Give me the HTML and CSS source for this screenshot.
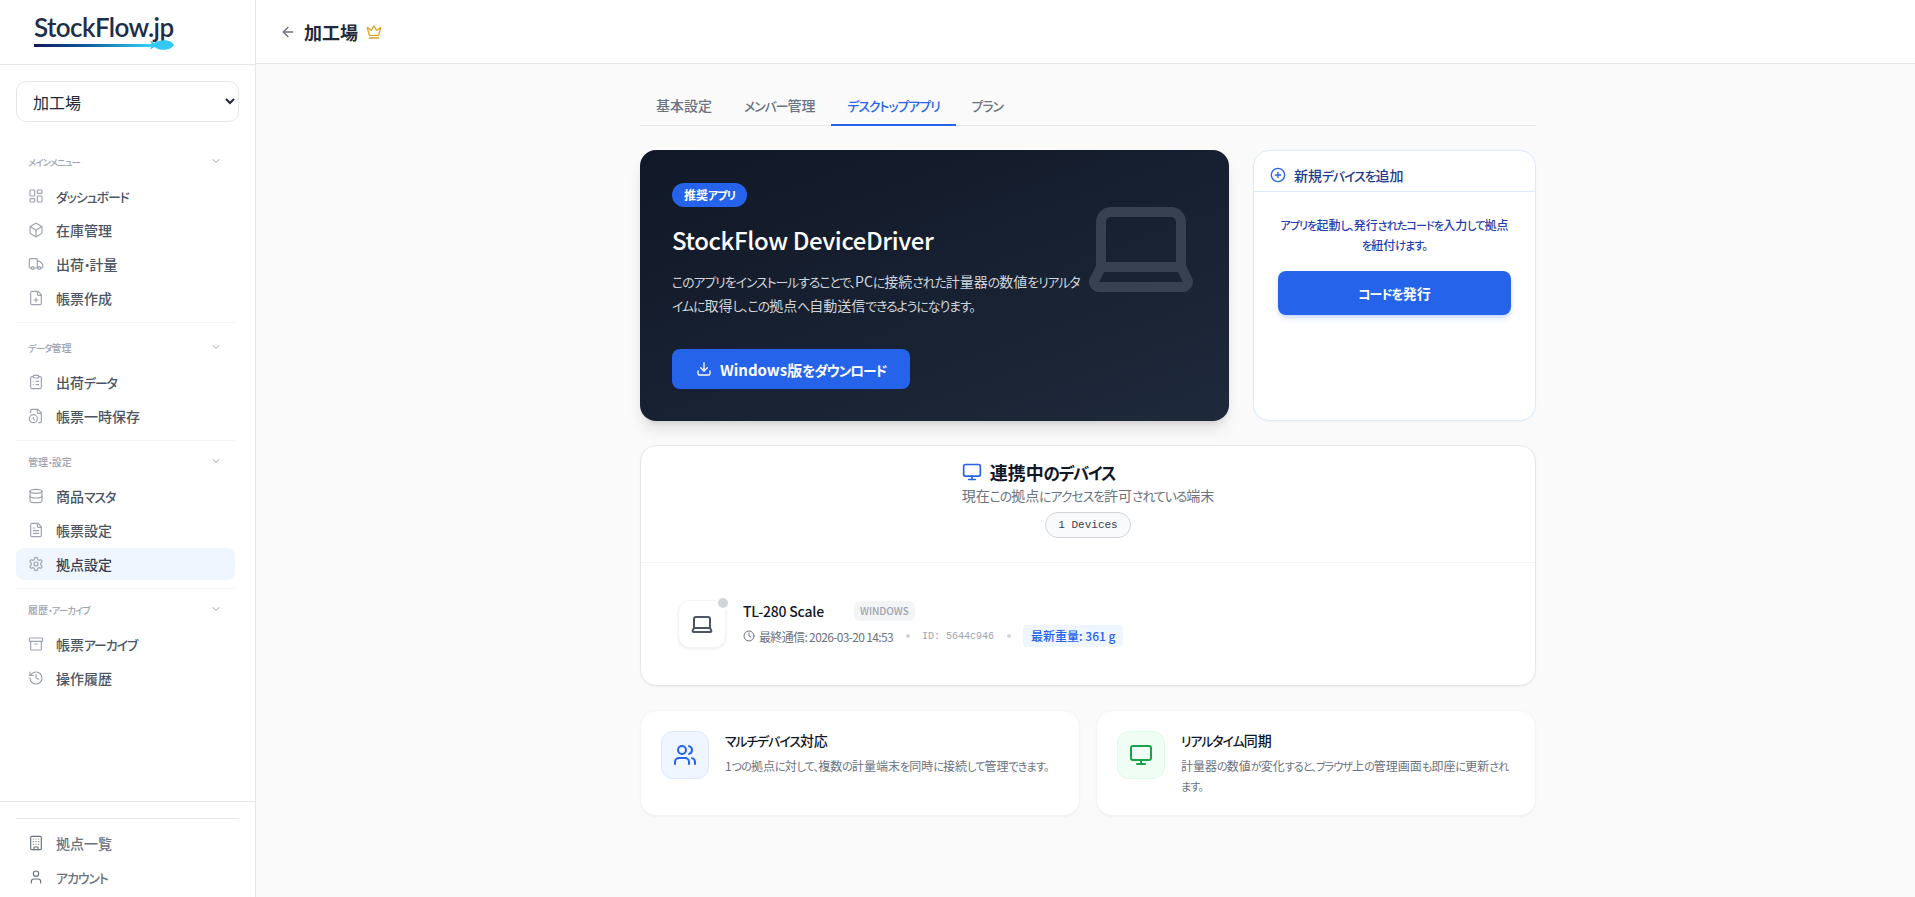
FILE: index.html
```html
<!DOCTYPE html>
<html lang="ja">
<head>
<meta charset="utf-8">
<title>StockFlow.jp</title>
<link rel="stylesheet" href="styles.css">
<script src="script.js" defer></script>
</head>
<body>
<svg class="sprite" aria-hidden="true">
  <symbol id="i-dash" viewBox="0 0 24 24"><rect x="3" y="3" width="7" height="9" rx="1"/><rect x="14" y="3" width="7" height="5" rx="1"/><rect x="14" y="12" width="7" height="9" rx="1"/><rect x="3" y="16" width="7" height="5" rx="1"/></symbol>
  <symbol id="i-box" viewBox="0 0 24 24"><path d="M21 8a2 2 0 0 0-1-1.73l-7-4a2 2 0 0 0-2 0l-7 4A2 2 0 0 0 3 8v8a2 2 0 0 0 1 1.73l7 4a2 2 0 0 0 2 0l7-4A2 2 0 0 0 21 16Z"/><path d="m3.3 7 8.7 5 8.7-5"/><path d="M12 22V12"/></symbol>
  <symbol id="i-truck" viewBox="0 0 24 24"><path d="M14 18V6a2 2 0 0 0-2-2H4a2 2 0 0 0-2 2v11a1 1 0 0 0 1 1h2"/><path d="M15 18H9"/><path d="M19 18h2a1 1 0 0 0 1-1v-3.65a1 1 0 0 0-.22-.624l-3.48-4.35A1 1 0 0 0 17.52 8H14"/><circle cx="17" cy="18" r="2"/><circle cx="7" cy="18" r="2"/></symbol>
  <symbol id="i-fileplus" viewBox="0 0 24 24"><path d="M15 2H6a2 2 0 0 0-2 2v16a2 2 0 0 0 2 2h12a2 2 0 0 0 2-2V7Z"/><path d="M14 2v4a2 2 0 0 0 2 2h4"/><path d="M9 15h6"/><path d="M12 18v-6"/></symbol>
  <symbol id="i-clip" viewBox="0 0 24 24"><rect x="8" y="2" width="8" height="4" rx="1"/><path d="M16 4h2a2 2 0 0 1 2 2v14a2 2 0 0 1-2 2H6a2 2 0 0 1-2-2V6a2 2 0 0 1 2-2h2"/><path d="M12 11h4"/><path d="M12 16h4"/><path d="M8 11h.01"/><path d="M8 16h.01"/></symbol>
  <symbol id="i-fileclock" viewBox="0 0 24 24"><path d="M16 22h2a2 2 0 0 0 2-2V7l-5-5H6a2 2 0 0 0-2 2v3"/><path d="M14 2v4a2 2 0 0 0 2 2h4"/><circle cx="8" cy="16" r="6"/><path d="M9.5 17.5 8 16.25V14"/></symbol>
  <symbol id="i-db" viewBox="0 0 24 24"><ellipse cx="12" cy="5" rx="9" ry="3"/><path d="M3 5V19A9 3 0 0 0 21 19V5"/><path d="M3 12A9 3 0 0 0 21 12"/></symbol>
  <symbol id="i-filetext" viewBox="0 0 24 24"><path d="M15 2H6a2 2 0 0 0-2 2v16a2 2 0 0 0 2 2h12a2 2 0 0 0 2-2V7Z"/><path d="M14 2v4a2 2 0 0 0 2 2h4"/><path d="M10 9H8"/><path d="M16 13H8"/><path d="M16 17H8"/></symbol>
  <symbol id="i-gear" viewBox="0 0 24 24"><path d="M12.22 2h-.44a2 2 0 0 0-2 2v.18a2 2 0 0 1-1 1.73l-.43.25a2 2 0 0 1-2 0l-.15-.08a2 2 0 0 0-2.73.73l-.22.38a2 2 0 0 0 .73 2.73l.15.1a2 2 0 0 1 1 1.72v.51a2 2 0 0 1-1 1.74l-.15.09a2 2 0 0 0-.73 2.73l.22.38a2 2 0 0 0 2.73.73l.15-.08a2 2 0 0 1 2 0l.43.25a2 2 0 0 1 1 1.73V20a2 2 0 0 0 2 2h.44a2 2 0 0 0 2-2v-.18a2 2 0 0 1 1-1.73l.43-.25a2 2 0 0 1 2 0l.15.08a2 2 0 0 0 2.73-.73l.22-.39a2 2 0 0 0-.73-2.73l-.15-.08a2 2 0 0 1-1-1.74v-.5a2 2 0 0 1 1-1.74l.15-.09a2 2 0 0 0 .73-2.73l-.22-.38a2 2 0 0 0-2.73-.73l-.15.08a2 2 0 0 1-2 0l-.43-.25a2 2 0 0 1-1-1.73V4a2 2 0 0 0-2-2z"/><circle cx="12" cy="12" r="3"/></symbol>
  <symbol id="i-archive" viewBox="0 0 24 24"><rect x="2" y="3" width="20" height="5" rx="1"/><path d="M4 8v11a2 2 0 0 0 2 2h12a2 2 0 0 0 2-2V8"/><path d="M10 12h4"/></symbol>
  <symbol id="i-history" viewBox="0 0 24 24"><path d="M3 12a9 9 0 1 0 9-9 9.75 9.75 0 0 0-6.74 2.74L3 8"/><path d="M3 3v5h5"/><path d="M12 7v5l4 2"/></symbol>
  <symbol id="i-building" viewBox="0 0 24 24"><rect x="4" y="2" width="16" height="20" rx="2"/><path d="M9 22v-4h6v4"/><path d="M8 6h.01"/><path d="M16 6h.01"/><path d="M12 6h.01"/><path d="M12 10h.01"/><path d="M12 14h.01"/><path d="M16 10h.01"/><path d="M16 14h.01"/><path d="M8 10h.01"/><path d="M8 14h.01"/></symbol>
  <symbol id="i-user" viewBox="0 0 24 24"><path d="M19 21v-2a4 4 0 0 0-4-4H9a4 4 0 0 0-4 4v2"/><circle cx="12" cy="7" r="4"/></symbol>
  <symbol id="i-chev" viewBox="0 0 24 24"><path d="m6 9 6 6 6-6"/></symbol>
  <symbol id="i-back" viewBox="0 0 24 24"><path d="m12 19-7-7 7-7"/><path d="M19 12H5"/></symbol>
  <symbol id="i-crown" viewBox="0 0 24 24"><path d="M11.562 3.266a.5.5 0 0 1 .876 0L15.39 8.87a1 1 0 0 0 1.516.294L21.183 5.5a.5.5 0 0 1 .798.519l-2.834 10.246a1 1 0 0 1-.956.734H5.81a1 1 0 0 1-.957-.734L2.02 6.02a.5.5 0 0 1 .798-.519l4.276 3.664a1 1 0 0 0 1.516-.294z"/><path d="M5 21h14"/></symbol>
  <symbol id="i-laptop" viewBox="0 0 24 24"><path d="M20 16V7a2 2 0 0 0-2-2H6a2 2 0 0 0-2 2v9m16 0H4m16 0 1.28 2.55a1 1 0 0 1-.9 1.45H3.62a1 1 0 0 1-.9-1.45L4 16"/></symbol>
  <symbol id="i-download" viewBox="0 0 24 24"><path d="M21 15v4a2 2 0 0 1-2 2H5a2 2 0 0 1-2-2v-4"/><path d="m7 10 5 5 5-5"/><path d="M12 15V3"/></symbol>
  <symbol id="i-plus" viewBox="0 0 24 24"><circle cx="12" cy="12" r="10"/><path d="M8 12h8"/><path d="M12 8v8"/></symbol>
  <symbol id="i-monitor" viewBox="0 0 24 24"><rect x="2" y="3" width="20" height="14" rx="2"/><path d="M8 21h8"/><path d="M12 17v4"/></symbol>
  <symbol id="i-clock" viewBox="0 0 24 24"><circle cx="12" cy="12" r="10"/><path d="M12 6v6l4 2"/></symbol>
  <symbol id="i-users" viewBox="0 0 24 24"><path d="M16 21v-2a4 4 0 0 0-4-4H6a4 4 0 0 0-4 4v2"/><path d="M16 3.128a4 4 0 0 1 0 7.744"/><path d="M22 21v-2a4 4 0 0 0-3-3.87"/><circle cx="9" cy="7" r="4"/></symbol>
</svg>

<div class="app">
  <aside class="sidebar">
    <div class="brand">
      <div class="logo">
        <span class="logo-text">StockFlow.jp</span>
        <div class="logo-line">
          <span class="logo-bar"></span>
          <svg class="logo-fish" viewBox="0 0 24 10"><path d="M0 0.5 L4.5 3 C7 0.8 11 0 15 0.2 C20 0.5 23 3 24 5 C23 7.5 19 9.7 14 9.8 C10 9.8 7 9 4.5 7 L0 9.5 L2 5 Z"/></svg>
        </div>
      </div>
    </div>
    <div class="site-select-wrap">
      <select class="site-select"><option>加工場</option></select>
    </div>
    <nav class="nav">
      <section class="nav-group">
        <div class="nav-label"><span>メインメニュー</span><svg class="ico nav-chev"><use href="#i-chev"/></svg></div>
        <a class="nav-item"><svg class="ico"><use href="#i-dash"/></svg><span>ダッシュボード</span></a>
        <a class="nav-item"><svg class="ico"><use href="#i-box"/></svg><span>在庫管理</span></a>
        <a class="nav-item"><svg class="ico"><use href="#i-truck"/></svg><span>出荷・計量</span></a>
        <a class="nav-item"><svg class="ico"><use href="#i-fileplus"/></svg><span>帳票作成</span></a>
      </section>
      <section class="nav-group">
        <div class="nav-label"><span>データ管理</span><svg class="ico nav-chev"><use href="#i-chev"/></svg></div>
        <a class="nav-item"><svg class="ico"><use href="#i-clip"/></svg><span>出荷データ</span></a>
        <a class="nav-item"><svg class="ico"><use href="#i-fileclock"/></svg><span>帳票一時保存</span></a>
      </section>
      <section class="nav-group">
        <div class="nav-label"><span>管理・設定</span><svg class="ico nav-chev"><use href="#i-chev"/></svg></div>
        <a class="nav-item"><svg class="ico"><use href="#i-db"/></svg><span>商品マスタ</span></a>
        <a class="nav-item"><svg class="ico"><use href="#i-filetext"/></svg><span>帳票設定</span></a>
        <a class="nav-item active"><svg class="ico"><use href="#i-gear"/></svg><span>拠点設定</span></a>
      </section>
      <section class="nav-group last">
        <div class="nav-label"><span>履歴・アーカイブ</span><svg class="ico nav-chev"><use href="#i-chev"/></svg></div>
        <a class="nav-item"><svg class="ico"><use href="#i-archive"/></svg><span>帳票アーカイブ</span></a>
        <a class="nav-item"><svg class="ico"><use href="#i-history"/></svg><span>操作履歴</span></a>
      </section>
    </nav>
    <div class="side-foot">
      <div class="side-foot-inner">
        <a class="nav-item foot"><svg class="ico"><use href="#i-building"/></svg><span>拠点一覧</span></a>
        <a class="nav-item foot"><svg class="ico"><use href="#i-user"/></svg><span>アカウント</span></a>
      </div>
    </div>
  </aside>

  <div class="main">
    <header class="topbar">
      <svg class="ico back"><use href="#i-back"/></svg>
      <h1 class="page-title">加工場</h1>
      <svg class="ico crown"><use href="#i-crown"/></svg>
    </header>
    <main class="content">
      <div class="container">
        <div class="tabs">
          <a class="tab">基本設定</a>
          <a class="tab">メンバー管理</a>
          <a class="tab active">デスクトップアプリ</a>
          <a class="tab">プラン</a>
        </div>

        <div class="top-grid">
          <section class="hero">
            <svg class="ico hero-art"><use href="#i-laptop"/></svg>
            <span class="hero-badge">推奨アプリ</span>
            <h2 class="hero-title">StockFlow DeviceDriver</h2>
            <p class="hero-text">このアプリをインストールすることで、PCに接続された計量器の数値をリアルタ<br>イムに取得し、この拠点へ自動送信できるようになります。</p>
            <button class="hero-btn"><svg class="ico"><use href="#i-download"/></svg><span>Windows版をダウンロード</span></button>
          </section>
          <section class="add-card">
            <div class="add-head"><svg class="ico"><use href="#i-plus"/></svg><span>新規デバイスを追加</span></div>
            <div class="add-body">
              <p class="add-text">アプリを起動し、発行されたコードを入力して拠点<br>を紐付けます。</p>
              <button class="add-btn">コードを発行</button>
            </div>
          </section>
        </div>

        <section class="devices">
          <div class="devices-head">
            <div class="devices-intro">
              <div class="devices-title"><svg class="ico"><use href="#i-monitor"/></svg><span>連携中のデバイス</span></div>
              <p class="devices-sub">現在この拠点にアクセスを許可されている端末</p>
            </div>
            <span class="count-pill">1 Devices</span>
          </div>
          <div class="device-row">
            <div class="device-icon"><svg class="ico"><use href="#i-laptop"/></svg><span class="status-dot"></span></div>
            <div class="device-info">
              <div class="device-name-row"><span class="device-name">TL-280 Scale</span><span class="os-chip">WINDOWS</span></div>
              <div class="device-meta">
                <span class="meta-time"><svg class="ico"><use href="#i-clock"/></svg><span>最終通信: 2026-03-20 14:53</span></span>
                <span class="meta-dot"></span>
                <span class="meta-id">ID: 5644c946</span>
                <span class="meta-dot"></span>
                <span class="meta-weight">最新重量: 361 g</span>
              </div>
            </div>
          </div>
        </section>

        <div class="feature-grid">
          <article class="feature">
            <div class="feature-icon blue"><svg class="ico"><use href="#i-users"/></svg></div>
            <div>
              <h3 class="feature-title">マルチデバイス対応</h3>
              <p class="feature-text">1つの拠点に対して、複数の計量端末を同時に接続して管理できます。</p>
            </div>
          </article>
          <article class="feature">
            <div class="feature-icon green"><svg class="ico"><use href="#i-monitor"/></svg></div>
            <div>
              <h3 class="feature-title">リアルタイム同期</h3>
              <p class="feature-text">計量器の数値が変化すると、ブラウザ上の管理画面も即座に更新され<br>ます。</p>
            </div>
          </article>
        </div>
      </div>
    </main>
  </div>
</div>
</body>
</html>
```

FILE: styles.css
```css
* { box-sizing: border-box; }
html, body { margin: 0; height: 100%; overflow: hidden; }
body {
  font-family: "Noto Sans CJK JP", "Noto Sans", sans-serif;
  font-feature-settings: "palt";
  color: #111827;
  background: #fafafa;
}
.kn { font-size: .92em; letter-spacing: -0.08em; line-height: 0; }
.sprite { display: none; }
.ico {
  width: 16px; height: 16px; flex: none;
  fill: none; stroke: currentColor; stroke-width: 2;
  stroke-linecap: round; stroke-linejoin: round;
}
.app { display: flex; height: 897px; }

/* sidebar */
.sidebar {
  width: 256px; flex: none; display: flex; flex-direction: column;
  background: #fff; border-right: 1px solid #e5e7eb;
}
.brand { height: 65px; flex: none; border-bottom: 1px solid #e5e7eb; padding: 15px 0 0 34px; }
.logo { width: 141px; }
.logo-text {
  display: block; font-family: "Lato", sans-serif; font-size: 26px; line-height: 25px;
  font-weight: 600; color: #1c2f4a; letter-spacing: -0.6px; white-space: nowrap;
  font-feature-settings: normal;
}
.logo-line { display: flex; align-items: center; height: 10px; }
.logo-bar { width: 118px; height: 3px; background: linear-gradient(90deg, #0e1a5c 0%, #0f5a9c 45%, #35d4fb 100%); }
.logo-fish { width: 24px; height: 10px; fill: #35c8f5; margin-left: -2px; }
.site-select-wrap { padding: 16px 16px 0; flex: none; }
.site-select {
  width: 100%; height: 41px; padding: 0 12px; font: inherit; font-size: 16px; color: #1f2937;
  background: #fff; border: 1px solid #e5e7eb; border-radius: 10px;
}
.nav { flex: 1; padding: 29px 0 0 16px; min-height: 0; width: 235px; }
.nav-group { border-bottom: 1px solid #f3f4f6; padding-bottom: 8px; margin-bottom: 10px; }
.nav-group:first-child { margin-bottom: 14px; }
.nav-group.last { border-bottom: 0; }
.nav-label {
  display: flex; justify-content: space-between; align-items: center;
  height: 20px; padding: 0 12px; margin-bottom: 9px; font-size: 10px; font-weight: 500; color: #9ca3af;
}
.nav-chev { width: 12px; height: 12px; margin-right: 1px; }
.nav-item {
  display: flex; align-items: center; gap: 12px; height: 32px; margin-bottom: 2px; padding: 0 12px;
  font-size: 14px; font-weight: 500; color: #4b5563; border-radius: 8px;
}
.nav-group .nav-item:last-child { margin-bottom: 0; }
.nav-item .ico { color: #9ca3af; stroke-width: 1.75; }
.nav-item.active { background: #eff6ff; color: #374151; }
.side-foot { flex: none; border-top: 1px solid #e5e7eb; padding: 16px 16px 2px; }
.side-foot-inner { border-top: 1px solid #e5e7eb; padding-top: 8px; }
.nav-item.foot { color: #6b7280; margin-bottom: 2px; }
.nav-item.foot .ico { color: #6b7280; }

/* main */
.main { flex: 1; display: flex; flex-direction: column; min-width: 0; }
.topbar {
  height: 64px; flex: none; display: flex; align-items: center; padding-left: 24px;
  background: #fff; border-bottom: 1px solid #e5e7eb;
}
.back { color: #6b7280; margin-right: 8px; }
.page-title { margin: 0 8px 0 0; font-size: 18px; line-height: 28px; font-weight: 600; color: #1f2937; }
.crown { color: #d9a22e; }
.content { flex: 1; padding: 24px 0 0 384px; }
.container { width: 896px; }

.tabs { display: flex; border-bottom: 1px solid #e5e7eb; height: 38px; }
.tab {
  padding: 0 16px; height: 38px; line-height: 34px; font-size: 14px; font-weight: 500; color: #6b7280;
  border-bottom: 2px solid transparent;
}
.tab.active { color: #2563eb; border-bottom-color: #2563eb; }

.top-grid { display: grid; grid-template-columns: 589px 1fr; gap: 24px; margin-top: 24px; height: 271px; }
.hero {
  position: relative; padding: 33px 32px 0; border-radius: 16px; color: #fff;
  background: linear-gradient(160deg, #111827 0%, #1e293b 100%);
  box-shadow: 0 10px 15px -3px rgba(0,0,0,.12), 0 4px 6px -4px rgba(0,0,0,.12);
}
.hero-art { position: absolute; top: 37px; right: 28px; width: 120px; height: 120px; color: #374151; }
.hero-badge {
  display: block; width: fit-content; height: 24px; line-height: 24px; padding: 0 12px; border-radius: 999px;
  background: #2563eb; font-size: 12px; font-weight: 700;
}
.hero-title { margin: 17px 0 0; font-size: 24px; line-height: 32px; font-weight: 500; letter-spacing: -0.4px; }
.hero-text { margin: 13px 0 0; width: 420px; font-size: 14px; line-height: 24px; color: #d1d5db; position: relative; }
.hero-btn {
  display: flex; align-items: center; gap: 8px; margin-top: 32px; height: 40px; padding: 0 24px; border: 0;
  border-radius: 8px; background: #2563eb; color: #fff; font: inherit; font-size: 15px; font-weight: 600;
  font-feature-settings: "palt";
}

.add-card { background: #fff; border: 1px solid #dbeafe; border-radius: 16px; box-shadow: 0 1px 2px rgba(0,0,0,.03); }
.add-head {
  display: flex; align-items: center; gap: 8px; height: 41px; padding: 8px 16px 0;
  border-bottom: 1px solid #dbeafe; font-size: 14px; font-weight: 500; color: #1e3a8a;
}
.add-head .ico { color: #2563eb; }
.add-body { padding: 23px 24px 0; }
.add-text { margin: 0; font-size: 12px; line-height: 20px; text-align: center; color: #1e40af; font-weight: 500; }
.add-btn {
  display: block; width: 100%; height: 44px; margin-top: 16px; border: 0; border-radius: 8px;
  background: #2563eb; color: #fff; font: inherit; font-size: 14px; font-weight: 600; font-feature-settings: "palt";
  box-shadow: 0 4px 6px -1px rgba(37,99,235,.2), 0 2px 4px -2px rgba(37,99,235,.2);
}

.devices {
  margin-top: 24px; height: 241px; background: #fff; border: 1px solid #e5e7eb; border-radius: 16px;
  box-shadow: 0 1px 2px rgba(0,0,0,.05);
}
.devices-head {
  height: 117px; display: flex; flex-direction: column; align-items: center; padding-top: 13px;
  border-bottom: 1px solid #f3f4f6;
}
.devices-title { display: flex; align-items: center; gap: 8px; font-size: 18px; line-height: 26px; font-weight: 600; color: #111827; }
.devices-title .ico { width: 20px; height: 20px; color: #2563eb; }
.devices-sub { margin: 0; font-size: 14px; line-height: 20px; color: #6b7280; }
.count-pill {
  margin-top: 7px; height: 26px; line-height: 24px; padding: 0 12px; border: 1px solid #d1d5db; border-radius: 999px;
  background: #f9fafb; font-family: "Liberation Mono", monospace; font-size: 11px; color: #374151;
}
.device-row { display: flex; align-items: center; gap: 17px; padding: 37px 37px 0; }
.device-icon {
  position: relative; width: 48px; height: 48px; display: flex; align-items: center; justify-content: center;
  border: 1px solid #f3f4f6; border-radius: 12px; background: #fff; box-shadow: 0 1px 3px rgba(0,0,0,.08); color: #4b5563;
}
.device-icon .ico { width: 24px; height: 24px; stroke-width: 2; }
.status-dot {
  position: absolute; top: -5px; right: -5px; width: 14px; height: 14px; border-radius: 50%;
  background: #d1d5db; border: 2px solid #fff;
}
.device-info { display: flex; flex-direction: column; }
.device-name-row { display: flex; align-items: center; gap: 30px; height: 22px; }
.device-name { font-size: 14px; font-weight: 500; color: #111827; letter-spacing: -.2px; }
.os-chip {
  height: 20px; line-height: 20px; padding: 0 6px; border-radius: 6px; background: #f3f4f6;
  font-size: 10px; font-weight: 500; color: #9ca3af;
}
.device-meta { display: flex; align-items: center; margin-top: 2px; font-size: 12px; color: #6b7280; height: 24px; }
.meta-time { display: flex; align-items: center; gap: 4px; white-space: nowrap; letter-spacing: -.65px; }
.meta-time .ico { width: 12px; height: 12px; }
.meta-dot { width: 4px; height: 4px; border-radius: 50%; background: #d1d5db; margin: 0 12.5px; }
.meta-id { font-family: "Liberation Mono", monospace; font-size: 10px; color: #9ca3af; white-space: nowrap; }
.meta-weight {
  height: 22px; line-height: 22px; padding: 0 8px; border-radius: 4px; background: #eff6ff; color: #2563eb;
  font-weight: 500; white-space: nowrap;
}

.feature-grid { display: grid; grid-template-columns: 1fr 1fr; gap: 16px; margin-top: 24px; }
.feature {
  display: flex; gap: 16px; height: 106px; padding: 20px; background: #fff; border: 1px solid #f3f4f6;
  border-radius: 16px; box-shadow: 0 1px 2px rgba(0,0,0,.04);
}
.feature-icon { width: 48px; height: 48px; flex: none; display: flex; align-items: center; justify-content: center; border-radius: 12px; border: 1px solid; }
.feature-icon .ico { width: 24px; height: 24px; }
.feature-icon.blue { background: #eff6ff; border-color: #dbeafe; color: #2563eb; }
.feature-icon.green { background: #f0fdf4; border-color: #dcfce7; color: #16a34a; }
.feature-title { margin: 0; font-size: 14px; line-height: 18px; font-weight: 500; color: #111827; }
.feature-text { margin: 7px 0 0; font-size: 12px; line-height: 20px; color: #6b7280; }
```

FILE: script.js
```js
// The reference face has narrow proportional kana; wrap kana runs so CSS can tighten only those.
const KANA = /[\u3001\u3002\u3041-\u309F\u30A0-\u30FF]+/g;
const walker = document.createTreeWalker(document.querySelector(".app"), NodeFilter.SHOW_TEXT);
const nodes = [];
while (walker.nextNode()) {
  const parent = walker.currentNode.parentElement;
  if (parent.tagName !== "OPTION" && KANA.test(walker.currentNode.data)) nodes.push(walker.currentNode);
  KANA.lastIndex = 0;
}
for (const node of nodes) {
  const frag = document.createDocumentFragment();
  let last = 0;
  for (const m of node.data.matchAll(KANA)) {
    frag.append(node.data.slice(last, m.index));
    const span = document.createElement("span");
    span.className = "kn";
    span.textContent = m[0];
    frag.append(span);
    last = m.index + m[0].length;
  }
  frag.append(node.data.slice(last));
  node.replaceWith(frag);
}
```
